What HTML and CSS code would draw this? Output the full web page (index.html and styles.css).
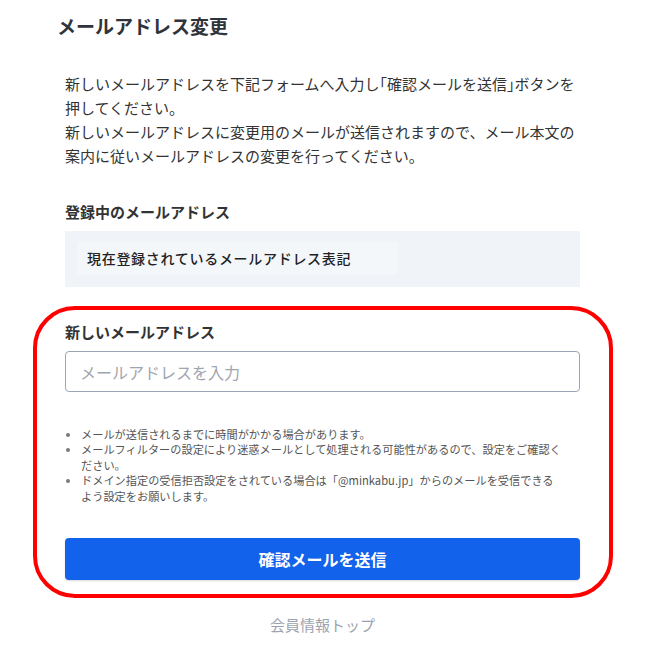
FILE: index.html
```html
<!DOCTYPE html>
<html lang="ja">
<head>
<meta charset="utf-8">
<title>メールアドレス変更</title>
<link rel="stylesheet" href="styles.css">
</head>
<body>
<main class="page">
  <h1 class="page-title">メールアドレス変更</h1>
  <p class="lead">新しいメールアドレスを下記フォームへ入力し<span class="kakko">「</span>確認メールを送信<span class="kakko">」</span>ボタンを押してください。<br>新しいメールアドレスに変更用のメールが送信されますので、メール本文の案内に従いメールアドレスの変更を行ってください。</p>

  <section class="current">
    <h2 class="field-label">登録中のメールアドレス</h2>
    <div class="current-box">
      <div class="current-value">現在登録されているメールアドレス表記</div>
    </div>
  </section>

  <form class="change-form">
    <label class="field-label" for="new-email">新しいメールアドレス</label>
    <input class="text-input" id="new-email" type="email" placeholder="メールアドレスを入力">
    <ul class="notes">
      <li>メールが送信されるまでに時間がかかる場合があります。</li>
      <li>メールフィルターの設定により迷惑メールとして処理される可能性があるので、設定をご確認ください。</li>
      <li>ドメイン指定の受信拒否設定をされている場合は「@minkabu.jp」からのメールを受信できるよう設定をお願いします。</li>
    </ul>
    <button class="submit" type="button">確認メールを送信</button>
  </form>

  <a class="back-link" href="#">会員情報トップ</a>
</main>
</body>
</html>
```

FILE: styles.css
```css
* { box-sizing: border-box; }

html, body {
  margin: 0;
  padding: 0;
  background: #fff;
}

body {
  font-family: "Noto Sans CJK JP", "Noto Sans", sans-serif;
  color: #333;
}

.page {
  width: 515px;
  margin: 0 0 0 65px;
  padding-top: 12px;
  display: flex;
  flex-direction: column;
}

.page-title {
  margin: 0 0 0 -8px;
  font-size: 19px;
  line-height: 28px;
  font-weight: 700;
  color: #2f343a;
}

.lead {
  margin: 32px 0 0;
  font-size: 15px;
  line-height: 24px;
  color: #333;
}

.kakko {
  font-feature-settings: "halt";
}

.current {
  margin-top: 32px;
}

.field-label {
  display: block;
  margin: 0 0 7px;
  font-size: 15px;
  line-height: 24px;
  font-weight: 700;
  color: #333;
}

.current-box {
  background: #f0f4f8;
  padding: 11px 12px 12px;
}

.current-value {
  width: 321px;
  background: #f4f7fa;
  padding: 6px 10px;
  font-size: 14px;
  line-height: 21px;
  letter-spacing: 0.05em;
  font-weight: 500;
  color: #222;
}

.change-form {
  margin: 19px -33px 0 -32px;
  border: 4px solid #ff0000;
  border-radius: 42px;
  padding: 10px 29px 14px 28px;
  display: flex;
  flex-direction: column;
}

.text-input {
  display: block;
  width: 100%;
  height: 41px;
  margin: 0;
  border: 1px solid #9aa5b6;
  border-radius: 4px;
  padding: 0 14px;
  font-family: inherit;
  font-size: 16px;
  color: #333;
  background: #fff;
}

.text-input::placeholder {
  color: #a0a6b0;
}

.notes {
  list-style: none;
  margin: 35px 0 0;
  padding: 0 16px 0 0;
  font-size: 11.2px;
  line-height: 15.4px;
  color: #555;
}

.notes li {
  display: flex;
}

.notes li::before {
  content: "";
  flex: none;
  width: 4px;
  height: 4px;
  border-radius: 50%;
  background: #7a7a7a;
  margin: 6px 11px 0 1px;
}

.submit {
  margin-top: 34px;
  height: 42px;
  border: 0;
  border-radius: 4px;
  background: #1262eb;
  box-shadow: 0 1px 2px rgba(0, 0, 0, 0.15);
  color: #fff;
  font-family: inherit;
  font-size: 16px;
  font-weight: 700;
  cursor: pointer;
}

.back-link {
  align-self: center;
  margin-top: 15px;
  font-size: 15px;
  line-height: 24px;
  color: #9ca3af;
  text-decoration: none;
}
```
